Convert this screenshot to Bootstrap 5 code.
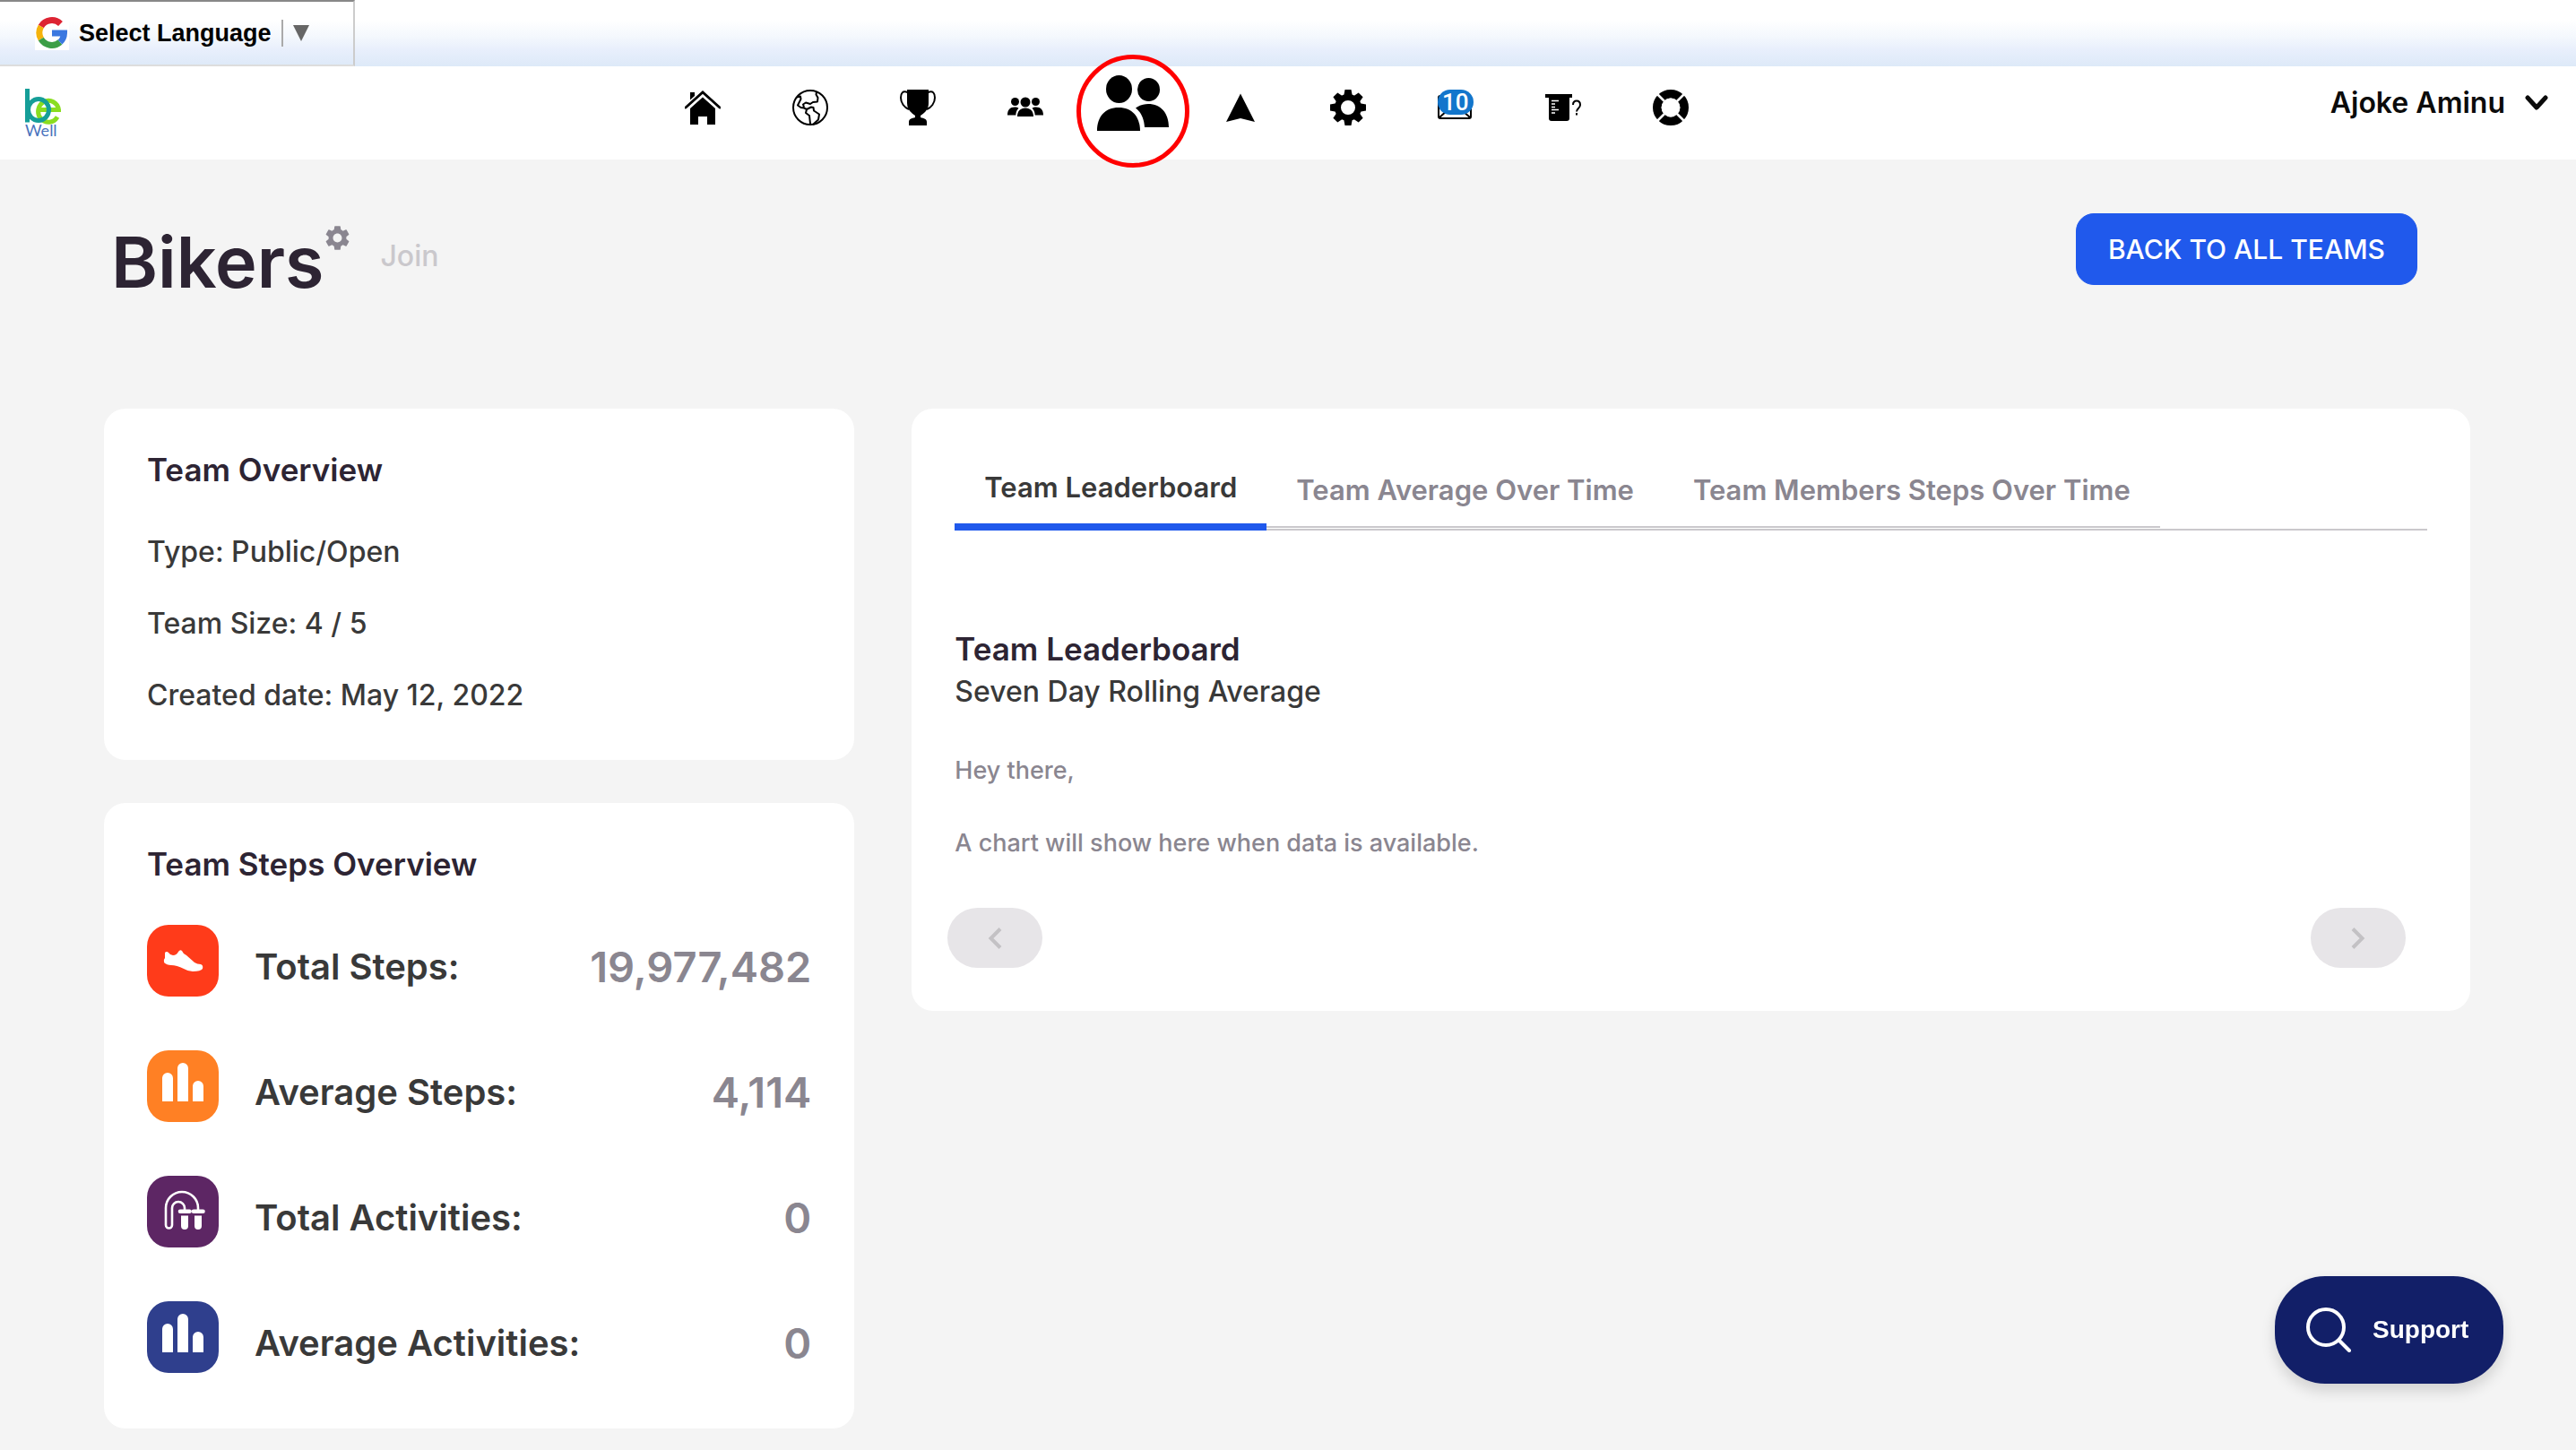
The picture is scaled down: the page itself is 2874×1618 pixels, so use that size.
<!DOCTYPE html>
<html lang="en">
<head>
<meta charset="utf-8">
<meta name="viewport" content="width=device-width, initial-scale=1">
<title>Bikers - Team</title>
<link href="https://cdn.jsdelivr.net/npm/bootstrap@5.3.0/dist/css/bootstrap.min.css" rel="stylesheet">
<style>
:root{--ink:#2d2433;--text:#393939;--muted:#8a8690;--line:#cac8cc;--blue:#2059ec}
body{background:#f4f4f4;color:var(--text);font-family:Inter,"Liberation Sans",sans-serif;font-size:32px;line-height:48px;font-weight:500;min-height:100vh}
svg{display:block;flex:none}
a{color:inherit;text-decoration:none}

/* translate strip */
.lang-strip{background:linear-gradient(#fff 30%,#f4f8fd 55%,#e8effc 75%,#dde9f8)}
.lang-btn{width:396px;height:74px;padding:0 0 0 39px;gap:11px;border:solid;border-width:2px 2px 2px 0;border-color:#888 #ccc #ddd;background:none;color:#000;font:bold 27px/30px "Liberation Sans",Arial,sans-serif}
.lang-g{background:#fff}
.lang-sep{width:2px;height:30px;background:#aaa}

/* header */
.site-header{height:104px;padding:0 28px}
.brand-link{padding-top:25px}
.main-nav{height:92px}
.main-nav .nav-item{width:120px}
.main-nav .nav-link{height:92px}
.nav-ring{position:absolute;left:-3px;top:-13px;width:126px;height:126px;border:5px solid #f00;border-radius:50%;pointer-events:none;z-index:2}
.nav-count{position:absolute;left:0;top:0;width:40px;height:28px;border-radius:14px;background:#1276cc;color:#fff;font:500 26px/28px Roboto,sans-serif;text-align:center}
.user-btn{height:82px;padding:0 3px 0 20px;gap:22px;border:0;background:none;color:#0b0b0b;font-size:32px;font-weight:600}

/* page */
.page-wrap{padding:60px 118px 23px 116px}
.page-head{padding:0 59px 110px 8px}
.page-head h1{font-size:79px;line-height:108px;font-weight:600;color:var(--ink);margin:0}
.title-gear{padding:14px 0 0 2px;border:0;background:none;color:var(--muted)}
.join-btn{margin-left:34px;padding:0;border:0;background:none;color:var(--line);font-size:32px;line-height:96px;font-weight:500}
.back-btn{--bs-btn-bg:var(--blue);--bs-btn-border-color:var(--blue);--bs-btn-color:#fff;border-radius:20px;padding:15px 35px;font-size:30px;line-height:48px;font-weight:500}
.page-grid{--bs-gutter-x:64px}
.left-col{gap:48px}
.panel{border:0;border-radius:24px;padding:48px}
.panel h2{font-size:35px;line-height:40px;font-weight:600;color:var(--ink);margin:0}
.facts{margin-top:48px;gap:32px}

.stats{margin-top:48px;gap:46px}
.stat{height:94px}
.stat dt{font-size:40px;font-weight:600;padding-left:40px}
.stat dd{font-size:47px;font-weight:600;color:var(--muted);margin:0}
.tile{width:80px;height:80px;border-radius:24px}

.team-tabs{border-bottom:2px solid var(--line)}
.team-tabs .nav-link{border:0;border-bottom:2px solid var(--line);border-radius:0;margin-bottom:1px;padding:16px 33px;color:var(--muted);background:none;font-size:31px;font-weight:600}
.team-tabs .nav-link.active{border-bottom:8px solid var(--blue);margin-bottom:-2px;color:var(--text)}
.board h2{margin:112px 0 4px}
.note{font-size:27px;line-height:40px;color:var(--muted);margin-top:44px;gap:41px}
.pager{margin:52px 24px 0 -8px}
.pager-btn{width:106px;height:67px;border:0;border-radius:34px;background:#e7e5e8;color:#c3c1c4}

.support-btn{position:fixed;right:81px;bottom:74px;width:255px;height:120px;padding:0 0 0 35px;gap:24px;border:0;border-radius:56px;background:#121f68;color:#fff;font:bold 28px/40px "Liberation Sans",Arial,sans-serif;box-shadow:0 8px 16px rgba(0,0,0,.14)}
</style>
</head>
<body>

<div class="lang-strip">
  <button class="lang-btn d-flex align-items-center" type="button">
    <svg class="lang-g" width="38" height="38" viewBox="0 0 38 38" fill="none" stroke-width="7"><path d="M28.500 8.500A14 14 0 0 0 6.800 11.500" stroke="#dd2433"/><path d="M6.800 11.500A14 14 0 0 0 6.800 25.500" stroke="#f5b30c"/><path d="M6.800 25.500A14 14 0 0 0 28 29" stroke="#3c9e46"/><path d="M28 29A14 14 0 0 0 32.500 19H19" stroke="#3b78e0"/></svg>
    <span>Select Language</span>
    <span class="lang-sep"></span>
    <svg width="18" height="18" viewBox="0 0 18 18"><path d="M0 0h18L9 18z" fill="#666"/></svg>
  </button>
</div>

<header class="site-header bg-white d-flex justify-content-between align-items-start">
  <a class="brand-link" href="#" aria-label="be Well">
    <svg width="40" height="64" viewBox="0 0 40 64" fill="none"><path d="M17 23.500H37.500A11.500 12 0 1 0 36 31.500" stroke="#8add20" stroke-width="5"/><ellipse cx="15" cy="23.500" rx="11.500" ry="12" stroke="#159e98" stroke-width="5"/><path d="M2.500 0V37.500" stroke="#159e98" stroke-width="5"/><text x="0" y="53" font-family="Lato" font-weight="400" font-size="18" fill="#4a73bd">Well</text></svg>
  </a>
  <nav class="main-nav" aria-label="Main">
    <ul class="nav flex-nowrap">
      <li class="nav-item"><a class="nav-link p-0 d-flex justify-content-center align-items-center text-black" href="#" aria-label="Home"><svg width="40" height="40" viewBox="0 0 40 40"><path d="M1 20L20 3l19 17" fill="none" stroke="#000" stroke-width="2.800" stroke-linecap="round"/><path d="M6 3h5v4l-5 4.500zM20 8.500L34 21v18h-9v-9H15v9H6V21z"/></svg></a></li>
      <li class="nav-item"><a class="nav-link p-0 d-flex justify-content-center align-items-center text-black" href="#" aria-label="Explore"><svg width="40" height="40" viewBox="0 0 40 40" fill="none" stroke="#000" stroke-width="2" stroke-linejoin="round"><circle cx="20" cy="20" r="19"/><path d="M5 8.500l4-1 .5 3-2.500 5-1 2 3.500 2.500 3.500.5 3 1.500 5-2.500 2.500.5.500 3.500 6 4-1 6-6 5.500M16 22l-1 4 4 3 1 9M27 2.500l-.5 3 2 3.500-.5 4.500-5 .5-3 2-5-1.500-3 2 1 3"/></svg></a></li>
      <li class="nav-item"><a class="nav-link p-0 d-flex justify-content-center align-items-center text-black" href="#" aria-label="Challenges"><svg width="40" height="40" viewBox="0 0 40 40"><path d="M8 0h24v15c0 6-3 10-9 14v2c4 1 7 2 7 5v4H10v-4c0-3 3-4 7-5v-2C11 25 8 21 8 15z"/><path d="M8.500 3C3 1 1 4 1 9c0 6 4 11 9 13M31.500 3C37 1 39 4 39 9c0 6-4 11-9 13" fill="none" stroke="#000" stroke-width="2"/></svg></a></li>
      <li class="nav-item"><a class="nav-link p-0 d-flex justify-content-center align-items-center text-black" href="#" aria-label="Community"><svg width="40" height="40" viewBox="0 0 40 40"><circle cx="20" cy="14" r="5.500"/><circle cx="8.500" cy="13.500" r="4.500"/><circle cx="31.500" cy="13.500" r="4.500"/><path d="M11 30c0-6 3.500-9.500 9-9.500s9 3.500 9 9.500zM0 28.500c0-6 3-9 8-9 2 0 3.500.4 4.500 1.200-2 1.800-3 4.300-3.200 7.800zM40 28.500c0-6-3-9-8-9-2 0-3.500.4-4.500 1.200 2 1.800 3 4.300 3.200 7.800z"/></svg></a></li>
      <li class="nav-item position-relative"><a class="nav-link p-0 d-flex justify-content-center align-items-center text-black" href="#" aria-label="Teams" aria-current="page"><svg width="80" height="72" viewBox="0 0 80 72"><ellipse cx="24.500" cy="15.500" rx="14.500" ry="15.500"/><ellipse cx="57.500" cy="16" rx="12.500" ry="13"/><path d="M0 62c0-16 9-26 24-26s24 10 24 26zM43 36.500c4-3 9-4.500 14-4.500 14 0 23 10 23 26H53c-.5-9-4-17-10-21.500z"/></svg></a><span class="nav-ring"></span></li>
      <li class="nav-item"><a class="nav-link p-0 d-flex justify-content-center align-items-center text-black" href="#" aria-label="Navigate"><svg width="40" height="40" viewBox="0 0 40 40"><path d="M20 4.500L36 36l-16-4-16 4z"/></svg></a></li>
      <li class="nav-item"><a class="nav-link p-0 d-flex justify-content-center align-items-center text-black" href="#" aria-label="Settings"><svg width="40" height="40" viewBox="0 0 40 40"><defs><path id="tooth" d="M16.500 0h7l1.500 8H15z"/></defs><circle cx="20" cy="20" r="11.500" fill="none" stroke="#000" stroke-width="7"/><use href="#tooth"/><use href="#tooth" transform="rotate(45 20 20)"/><use href="#tooth" transform="rotate(90 20 20)"/><use href="#tooth" transform="rotate(135 20 20)"/><use href="#tooth" transform="rotate(180 20 20)"/><use href="#tooth" transform="rotate(225 20 20)"/><use href="#tooth" transform="rotate(270 20 20)"/><use href="#tooth" transform="rotate(315 20 20)"/></svg></a></li>
      <li class="nav-item"><a class="nav-link p-0 d-flex justify-content-center align-items-center text-black" href="#" aria-label="Messages, 10 unread"><span class="position-relative"><svg width="40" height="40" viewBox="0 0 40 40" fill="none" stroke="#000" stroke-width="2"><rect x="1" y="7" width="36" height="25" rx="2"/><path d="M2 31l9-8M36 31l-9-8"/></svg><span class="nav-count">10</span></span></a></li>
      <li class="nav-item"><a class="nav-link p-0 d-flex justify-content-center align-items-center text-black" href="#" aria-label="Quiz"><svg width="40" height="40" viewBox="0 0 40 40"><path d="M0 5h30v4h-3v23q0 3-3 3H7q-3 0-3-3V9H0z"/><path d="M7 12.500h8M7 16h4M7 19.500h4M7 22.500h8M7 26h4" stroke="#fff" stroke-width="1.500"/><path d="M31 17c0-3 1.500-4.500 4-4.500s4 2 4 4.500c0 4-4 4-4 7.500M35 26v2.500" fill="none" stroke="#000" stroke-width="2"/></svg></a></li>
      <li class="nav-item"><a class="nav-link p-0 d-flex justify-content-center align-items-center text-black" href="#" aria-label="Help"><svg width="40" height="40" viewBox="0 0 40 40"><circle cx="20" cy="20" r="15.200" fill="none" stroke="#000" stroke-width="9.600"/><path d="M5 5l30 30M35 5L5 35" stroke="#fff" stroke-width="2.600"/><circle cx="20" cy="20" r="10.400" fill="#fff"/></svg></a></li>
    </ul>
  </nav>
  <button class="user-btn d-flex align-items-center" type="button">
    <span>Ajoke Aminu</span>
    <svg width="26" height="18" viewBox="0 0 26 18"><path d="M3 3l10 11L23 3" fill="none" stroke="#0b0b0b" stroke-width="5" stroke-linecap="round" stroke-linejoin="round"/></svg>
  </button>
</header>

<main class="page-wrap container-fluid">
  <div class="page-head d-flex justify-content-between align-items-start">
    <div class="d-flex align-items-start">
      <h1>Bikers</h1>
      <button class="title-gear" type="button" aria-label="Team settings"><svg width="27" height="27" viewBox="2.200 2.200 19.600 19.600" fill="currentColor"><path d="M19.140 12.940c.04-.3.06-.61.06-.94 0-.32-.02-.64-.07-.94l2.030-1.580c.18-.14.23-.41.12-.61l-1.920-3.320c-.12-.22-.37-.29-.59-.22l-2.390.96c-.5-.38-1.030-.7-1.620-.94l-.36-2.540c-.04-.24-.24-.41-.48-.41h-3.840c-.24 0-.43.17-.47.41l-.36 2.540c-.59.24-1.130.57-1.620.94l-2.390-.96c-.22-.08-.47 0-.59.22L2.740 8.870c-.12.21-.08.47.12.61l2.030 1.580c-.05.3-.09.63-.09.94s.02.64.07.94l-2.030 1.580c-.18.14-.23.41-.12.61l1.920 3.320c.12.22.37.29.59.22l2.390-.96c.5.38 1.030.7 1.620.94l.36 2.540c.05.24.24.41.48.41h3.840c.24 0 .44-.17.47-.41l.36-2.540c.59-.24 1.130-.56 1.620-.94l2.390.96c.22.08.47 0 .59-.22l1.920-3.320c.12-.22.07-.47-.12-.61l-2.010-1.580zM12 15.600c-1.980 0-3.600-1.620-3.600-3.600s1.620-3.600 3.600-3.600 3.600 1.620 3.600 3.600-1.620 3.600-3.600 3.600z"/></svg></button>
      <button class="join-btn" type="button">Join</button>
    </div>
    <a class="btn btn-primary back-btn" href="#">BACK TO ALL TEAMS</a>
  </div>

  <div class="row page-grid">
    <div class="col-4 d-flex flex-column left-col">
      <section class="card panel">
        <h2>Team Overview</h2>
        <div class="facts d-flex flex-column">
          <div>Type: Public/Open</div>
          <div>Team Size: 4 / 5</div>
          <div>Created date: May 12, 2022</div>
        </div>
      </section>
      <section class="card panel">
        <h2>Team Steps Overview</h2>
        <dl class="stats d-flex flex-column mb-0">
          <div class="stat d-flex align-items-center">
            <svg class="tile align-self-start" viewBox="0 0 80 80"><rect width="80" height="80" fill="#ff3b1a"/><path d="M20 31q2-2 4 0 2 3 5 3 4 0 6-4 2-3 4-1 1 3 5 5l9 8q3 2 7 2 3 1 2 5-2 3-11 3-5 0-10-3-8-4-14-4-5 0-8-3-1-3 1-5z" fill="#fff"/></svg>
            <dt class="flex-grow-1">Total Steps:</dt><dd>19,977,482</dd>
          </div>
          <div class="stat d-flex align-items-center">
            <svg class="tile align-self-start" viewBox="0 0 80 80"><rect width="80" height="80" fill="#ff8024"/><path d="M17 57V31a6 6 0 0 1 12 0v26zM34 57V20a6 6 0 0 1 12 0v37zM51 57V40a6 6 0 0 1 12 0v17z" fill="#fff"/></svg>
            <dt class="flex-grow-1">Average Steps:</dt><dd>4,114</dd>
          </div>
          <div class="stat d-flex align-items-center">
            <svg class="tile align-self-start" viewBox="0 0 80 80"><rect width="80" height="80" fill="#5d2664"/><path d="M57 38v-2a18 18 0 0 0-36 0v19a3.500 3.500 0 0 0 7 0V36a7 7 0 0 1 14 0v2" fill="none" stroke="#fff" stroke-width="2.600"/><path d="M37 37.500h10.500a2.300 2.300 0 0 1 0 4.600H37a2.300 2.300 0 0 1 0-4.600zM52 37.500h10.500a2.300 2.300 0 0 1 0 4.600H52a2.300 2.300 0 0 1 0-4.600zM38 44.500h8V56a4 4 0 0 1-8 0zM53 44.500h8V56a4 4 0 0 1-8 0z" fill="#fff"/></svg>
            <dt class="flex-grow-1">Total Activities:</dt><dd>0</dd>
          </div>
          <div class="stat d-flex align-items-center">
            <svg class="tile align-self-start" viewBox="0 0 80 80"><rect width="80" height="80" fill="#2f3f8d"/><path d="M17 57V31a6 6 0 0 1 12 0v26zM34 57V20a6 6 0 0 1 12 0v37zM51 57V40a6 6 0 0 1 12 0v17z" fill="#fff"/></svg>
            <dt class="flex-grow-1">Average Activities:</dt><dd>0</dd>
          </div>
        </dl>
      </section>
    </div>

    <div class="col-8">
      <section class="card panel board">
        <ul class="nav team-tabs align-items-end" role="tablist">
          <li class="nav-item"><button class="nav-link active" type="button" role="tab" aria-selected="true">Team Leaderboard</button></li>
          <li class="nav-item"><button class="nav-link" type="button" role="tab" aria-selected="false">Team Average Over Time</button></li>
          <li class="nav-item"><button class="nav-link" type="button" role="tab" aria-selected="false">Team Members Steps Over Time</button></li>
        </ul>
        <h2>Team Leaderboard</h2>
        <div>Seven Day Rolling Average</div>
        <div class="note d-flex flex-column">
          <div>Hey there,</div>
          <div>A chart will show here when data is available.</div>
        </div>
        <div class="pager d-flex justify-content-between">
          <button class="pager-btn d-flex justify-content-center align-items-center" type="button" aria-label="Previous"><svg width="16" height="24" viewBox="0 0 16 24"><path d="M14 1.500L3.500 12 14 22.500" fill="none" stroke="currentColor" stroke-width="4"/></svg></button>
          <button class="pager-btn d-flex justify-content-center align-items-center" type="button" aria-label="Next"><svg width="16" height="24" viewBox="0 0 16 24"><path d="M2 1.500L12.500 12 2 22.500" fill="none" stroke="currentColor" stroke-width="4"/></svg></button>
        </div>
      </section>
    </div>
  </div>
</main>

<button class="support-btn d-flex align-items-center" type="button">
  <svg width="50" height="50" viewBox="0 0 50 50" fill="none" stroke="#fff" stroke-width="4" stroke-linecap="round"><circle cx="22" cy="22" r="20"/><path d="M36.500 36.500L48 48"/></svg>
  <span>Support</span>
</button>

<script src="https://cdn.jsdelivr.net/npm/bootstrap@5.3.0/dist/js/bootstrap.bundle.min.js"></script>
</body>
</html>
